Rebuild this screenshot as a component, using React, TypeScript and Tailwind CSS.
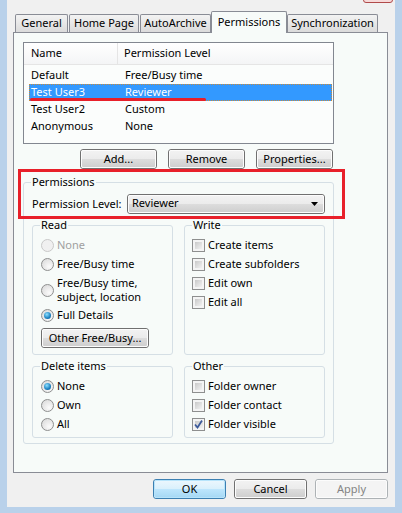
import React from "react";

const btnFace =
  "bg-[linear-gradient(#f2f2f2,#ebebeb_50%,#dddddd_50%,#cfcfcf)]";

function Radio({ checked, disabled }: { checked?: boolean; disabled?: boolean }) {
  return (
    <span
      className={`w-[13px] h-[13px] rounded-full border shrink-0 flex items-center justify-center ${
        disabled
          ? "border-[#c9c9c9] bg-[#f0f0f0]"
          : "border-[#8e8f8f] bg-[radial-gradient(circle_at_65%_70%,#fbfbfb,#d6d6d6)]"
      }`}
    >
      {checked && (
        <span className="w-[7px] h-[7px] rounded-full bg-[radial-gradient(circle_at_40%_35%,#8de0ff,#1b80c0_60%,#0a4f86)]" />
      )}
    </span>
  );
}

function Check({ checked }: { checked?: boolean }) {
  return (
    <span className="w-[13px] h-[13px] border border-[#8e8f8f] bg-[#f4f4f4] p-[2px] shrink-0 flex">
      <span className="flex-1 bg-linear-to-br from-[#c9c9c9] to-[#f2f2f2] flex items-center justify-center">
        {checked && (
          <svg width="9" height="9" viewBox="0 0 9 9" className="-ml-[1px]">
            <path d="M1 4.5 L3.5 7.5 L8 0.5" fill="none" stroke="#3c5a9a" strokeWidth="1.8" />
          </svg>
        )}
      </span>
    </span>
  );
}

function Button({
  children,
  className = "",
  face = btnFace,
  border = "border-[#707070]",
  text = "text-black",
}: {
  children: React.ReactNode;
  className?: string;
  face?: string;
  border?: string;
  text?: string;
}) {
  return (
    <div className={`h-[20px] rounded-[3px] border ${border} ${className} flex`}>
      <div
        className={`flex-1 rounded-[2px] border border-[#fcfcfc] ${face} ${text} flex items-center justify-center leading-[16px] pb-px`}
      >
        {children}
      </div>
    </div>
  );
}

function Group({
  label,
  className = "",
  inner = "",
  children,
}: {
  label: string;
  className?: string;
  inner?: string;
  children: React.ReactNode;
}) {
  return (
    <fieldset className={`border border-[#d5dfe5] rounded-[3px] min-w-0 ${className}`}>
      <legend className="ml-[7px] px-[1px] leading-[14px]">{label}</legend>
      <div className={inner}>{children}</div>
    </fieldset>
  );
}

function Row({ children }: { children: React.ReactNode }) {
  return <div className="h-[19px] flex items-center gap-[3px]">{children}</div>;
}

const tabs = [
  { label: "General", w: "w-[53px]" },
  { label: "Home Page", w: "w-[70px]" },
  { label: "AutoArchive", w: "w-[71px]" },
];

const people = [
  ["Default", "Free/Busy time"],
  ["Test User3", "Reviewer"],
  ["Test User2", "Custom"],
  ["Anonymous", "None"],
];

export default function App() {
  return (
    <div className="w-[402px] h-[513px] bg-[#b9d1ea] pl-[7px] pr-[7px] pb-[6px] font-['Noto_Sans',sans-serif] text-[11px] text-black overflow-hidden">
      <div className="relative h-full bg-[#f0f0f0] pt-[14px]">
        {/* close button edge */}
        <div className="absolute top-0 left-[356px] w-[30px] h-[4px] -mt-px rounded-b-[3px] border border-[#b04a4a] bg-[#f6d9d9]" />

        {/* tabs */}
        <div className="flex items-end ml-[8px] h-[18px]">
          {tabs.map((t) => (
            <div
              key={t.label}
              className={`${t.w} h-[18px] border border-b-0 border-[#898c95] rounded-t-[2px] bg-linear-to-b from-[#f3f3f3] to-[#dbdbdb] flex items-center justify-center mr-px`}
            >
              {t.label}
            </div>
          ))}
          <div className="relative z-10 w-[76px] h-[22px] -mb-px border border-b-0 border-[#898c95] rounded-t-[2px] bg-[#f7fbf9] flex items-start justify-center pt-[2px] -ml-px">
            Permissions
          </div>
          <div className="w-[91px] h-[18px] border border-b-0 border-[#898c95] rounded-t-[2px] bg-linear-to-b from-[#f3f3f3] to-[#dbdbdb] flex items-center justify-center">
            Synchronization
          </div>
        </div>

        {/* tab panel */}
        <div className="relative ml-[6px] w-[375px] h-[441px] border border-[#898c95] bg-[#f7fbf9] pt-[9px] pl-[9px]">
          {/* list */}
          <div className="relative w-[311px] h-[102px] border border-[#828790] bg-[#fbfdfc]">
            <div className="h-[22px] flex border-b border-[#e5e5e5] bg-linear-to-b from-white to-[#f4f5f6]">
              <div className="w-[94px] pl-[7px] flex items-center border-r border-[#e5e5e5]">Name</div>
              <div className="pl-[6px] flex items-center">Permission Level</div>
            </div>
            <div className="mt-[2px]">
              {people.map(([n, p], i) => (
                <div
                  key={n}
                  className={`h-[17px] ml-[5px] mr-px flex items-center ${
                    i === 1
                      ? "bg-[#3399ff] text-white outline-1 outline-dotted outline-[#c98a3a] -outline-offset-1"
                      : ""
                  }`}
                >
                  <span className="w-[96px] pl-[2px]">{n}</span>
                  <span>{p}</span>
                </div>
              ))}
            </div>
            <div className="absolute left-[6px] top-[55px] w-[176px] h-[3px] rounded-full bg-[#e8202a]" />
          </div>

          {/* list buttons */}
          <div className="w-[311px] flex justify-end gap-[11px] mt-[5px] pr-px">
            <Button className="w-[77px]">Add...</Button>
            <Button className="w-[77px]">Remove</Button>
            <Button className="w-[77px]">Properties...</Button>
          </div>

          {/* permissions group */}
          <Group label="Permissions" className="w-[311px] mt-[6px]" inner="px-[8px] pb-[5px]">
            <div className="h-[20px] mt-[5px] flex items-center">
              <span className="w-[95px]">Permission Level:</span>
              <div className="flex-1 h-[20px] rounded-[3px] border border-[#707070] flex">
                <div className={`flex-1 rounded-[2px] border border-[#fcfcfc] ${btnFace} flex items-center pl-[3px] pr-[5px] pb-px`}>
                  <span className="flex-1">Reviewer</span>
                  <svg width="7" height="4" viewBox="0 0 7 4">
                    <path d="M0 0 H7 L3.5 4 Z" fill="#000" />
                  </svg>
                </div>
              </div>
            </div>

            <div className="flex gap-[11px] mt-[4px]">
              <Group label="Read" className="flex-1" inner="pl-[8px] pt-[4px] pb-[6px]">
                <Row>
                  <Radio disabled />
                  <span className="text-[#a0a0a0]">None</span>
                </Row>
                <Row>
                  <Radio />
                  <span>Free/Busy time</span>
                </Row>
                <div className="h-[32px] flex items-center gap-[3px]">
                  <Radio />
                  <div className="leading-[14px]">
                    <div>Free/Busy time,</div>
                    <div>subject, location</div>
                  </div>
                </div>
                <Row>
                  <Radio checked />
                  <span>Full Details</span>
                </Row>
                <Button className="w-[108px] mt-[3px]">Other Free/Busy...</Button>
              </Group>
              <Group label="Write" className="flex-1" inner="pl-[7px] pt-[4px]">
                <Row>
                  <Check />
                  <span>Create items</span>
                </Row>
                <Row>
                  <Check />
                  <span>Create subfolders</span>
                </Row>
                <Row>
                  <Check />
                  <span>Edit own</span>
                </Row>
                <Row>
                  <Check />
                  <span>Edit all</span>
                </Row>
              </Group>
            </div>

            <div className="flex gap-[11px] mt-[4px]">
              <Group label="Delete items" className="flex-1" inner="pl-[8px] pt-[4px] pb-[3px]">
                <Row>
                  <Radio checked />
                  <span>None</span>
                </Row>
                <Row>
                  <Radio />
                  <span>Own</span>
                </Row>
                <Row>
                  <Radio />
                  <span>All</span>
                </Row>
              </Group>
              <Group label="Other" className="flex-1" inner="pl-[7px] pt-[4px] pb-[3px]">
                <Row>
                  <Check />
                  <span>Folder owner</span>
                </Row>
                <Row>
                  <Check />
                  <span>Folder contact</span>
                </Row>
                <Row>
                  <Check checked />
                  <span>Folder visible</span>
                </Row>
              </Group>
            </div>
          </Group>

          {/* annotation */}
          <div className="absolute left-[4px] top-[136px] w-[327px] h-[50px] border-[3px] border-[#e8202a]" />
        </div>

        {/* dialog buttons */}
        <div className="flex justify-end gap-[8px] mt-[6px] pr-[7px]">
          <Button
            className="w-[73px]"
            border="border-[#3c7fb1]"
            face="bg-[linear-gradient(#eaf6fd,#d9f0fc_50%,#bee6fd_50%,#a7d9f5)] !border-[#b7e4fb]"
          >
            OK
          </Button>
          <Button className="w-[73px]">Cancel</Button>
          <Button
            className="w-[73px]"
            border="border-[#adb2b5]"
            face="bg-[#f4f4f4]"
            text="text-[#838383]"
          >
            Apply
          </Button>
        </div>
      </div>
    </div>
  );
}
